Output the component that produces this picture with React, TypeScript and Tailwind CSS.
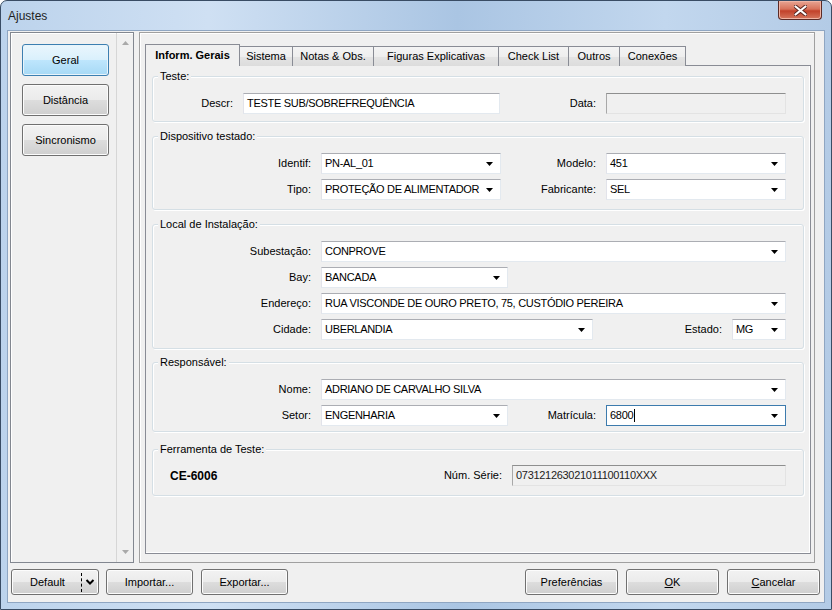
import React from "react";

const btnBg =
  "bg-[linear-gradient(#f2f2f2,#ebebeb_50%,#dddddd_50%,#cfcfcf)] border border-[#707070] rounded-[3px] shadow-[inset_0_0_0_1px_#fcfcfc]";

const Arrow = () => (
  <svg width="7" height="4" viewBox="0 0 7 4" className="absolute right-[7px] top-[8px]">
    <path d="M0 0h7L3.5 4z" fill="#000" />
  </svg>
);

const Combo = ({ value, className, focused }: { value: string; className: string; focused?: boolean }) => (
  <div
    className={`relative flex h-[21px] shrink-0 items-center bg-white pl-[3px] text-[11px] tracking-[-0.3px] border ${
      focused ? "border-[#3d7bad]" : "border-[#e3e9ef] border-t-[#abadb3] border-l-[#e2e3ea]"
    } ${className}`}
  >
    <span className="whitespace-nowrap">{value}</span>
    {focused && <span className="ml-[1px] h-[13px] w-[1px] bg-black" />}
    <Arrow />
  </div>
);

const TextBox = ({ value, className, disabled }: { value: string; className: string; disabled?: boolean }) => (
  <div
    className={`flex h-[21px] shrink-0 items-center pl-[3px] text-[11px] tracking-[-0.3px] border ${
      disabled
        ? "bg-[#f0f0f0] border-[#e3e3e3] border-t-[#8e8f8f] border-l-[#a8a8a8] text-[#222]"
        : "bg-white border-[#e3e9ef] border-t-[#abadb3] border-l-[#e2e3ea]"
    } ${className}`}
  >
    <span className="whitespace-nowrap">{value}</span>
  </div>
);

const Label = ({ text, className }: { text: string; className: string }) => (
  <span className={`shrink-0 pr-[10px] text-right text-[11px] whitespace-nowrap ${className}`}>{text}</span>
);

const Group = ({ title, className, children }: { title: string; className: string; children: React.ReactNode }) => (
  <div className={`relative rounded-[3px] border border-[#d5dfe5] shadow-[inset_1px_1px_0_#fff,1px_1px_0_#fff] ${className}`}>
    <span className="absolute -top-[8px] left-[5px] bg-[#f0f0f0] px-[2px] text-[11px] leading-[14px]">{title}</span>
    {children}
  </div>
);

const SideButton = ({ text, active }: { text: string; active?: boolean }) => (
  <div
    className={`flex h-[32px] w-[87px] items-center justify-center text-[11px] ${
      active
        ? "rounded-[3px] border border-[#3c7fb1] bg-[linear-gradient(#eaf6fd,#d9f0fc_50%,#bee6fd_50%,#a7d9f5)] shadow-[inset_0_0_0_1px_#e8f4fb]"
        : btnBg
    }`}
  >
    {text}
  </div>
);

const Tab = ({ text, className }: { text: string; className: string }) => (
  <div
    className={`-ml-[1px] flex h-[20px] items-center justify-center border border-b-0 border-[#898c95] bg-[linear-gradient(#f4f4f4,#eeeeee_50%,#e4e4e4_50%,#dcdcdc)] text-[11px] ${className}`}
  >
    {text}
  </div>
);

const BottomButton = ({ children, className }: { children: React.ReactNode; className: string }) => (
  <div className={`flex h-[26px] items-center justify-center text-[11px] ${btnBg} ${className}`}>{children}</div>
);

export default function App() {
  return (
    <div className="h-[610px] w-[832px] overflow-hidden rounded-t-[7px] border border-[#394c64] bg-[linear-gradient(90deg,#bcd3ec,#cfe0f3_25%,#aac5e3_55%,#c2d7ee_80%,#b3cbe6)] font-['Liberation_Sans',Arial,sans-serif] text-black">
      {/* title bar */}
      <div className="flex h-[29px] items-start justify-between pl-[7px] pr-[9px]">
        <span className="mt-[6px] text-[12px] text-[#1e1e1e]">Ajustes</span>
        <div className="flex h-[19px] w-[44px] items-center justify-center rounded-b-[4px] border border-t-0 border-[#5b2a25] bg-[linear-gradient(#e8a593,#d8725a_45%,#c2412a_55%,#d5765d)] shadow-[inset_0_0_0_1px_#f0b4a4]">
          <svg width="13" height="11" viewBox="0 0 13 11">
            <path d="M1.5 1.5l10 8M11.5 1.5l-10 8" stroke="#5a2620" strokeWidth="4" strokeLinecap="round" />
            <path d="M1.5 1.5l10 8M11.5 1.5l-10 8" stroke="#fff" strokeWidth="2.2" strokeLinecap="round" />
          </svg>
        </div>
      </div>

      {/* client */}
      <div className="mx-[6px] h-[573px] border border-[#8fa6c2] bg-[#f0f0f0]">
        <div className="flex pl-[2px] pt-[1px]">
          {/* left panel */}
          <div className="flex h-[531px] w-[124px] border border-[#828790] bg-[#f0f0f0] shadow-[inset_1px_1px_0_#fff]">
            <div className="flex flex-col gap-[8px] pl-[11px] pt-[11px]">
              <SideButton text="Geral" active />
              <SideButton text="Distância" />
              <SideButton text="Sincronismo" />
            </div>
            <div className="ml-auto flex w-[17px] flex-col items-center justify-between border-l border-[#d6d6d6] py-[8px]">
              <svg width="7" height="4" viewBox="0 0 7 4">
                <path d="M0 4h7L3.5 0z" fill="#a9a9a9" />
              </svg>
              <svg width="7" height="4" viewBox="0 0 7 4">
                <path d="M0 0h7L3.5 4z" fill="#a9a9a9" />
              </svg>
            </div>
          </div>

          {/* main panel */}
          <div className="ml-[5px] h-[531px] w-[676px] border border-[#a0a0a0] pl-[5px] pt-[11px] shadow-[inset_1px_1px_0_#fff]">
            <div className="flex h-[22px] items-end">
              <div className="relative z-10 flex h-[22px] w-[95px] items-center justify-center border border-b-0 border-[#898c95] bg-[#f0f0f0] text-[11px] font-bold">
                Inform. Gerais
              </div>
              <Tab text="Sistema" className="w-[54px]" />
              <Tab text="Notas & Obs." className="w-[82px]" />
              <Tab text="Figuras Explicativas" className="w-[126px]" />
              <Tab text="Check List" className="w-[71px]" />
              <Tab text="Outros" className="w-[52px]" />
              <Tab text="Conexões" className="w-[67px]" />
            </div>
            <div className="-mt-[1px] h-[489px] w-[666px] border border-[#898c95] bg-[#f0f0f0] px-[6px] pt-[10px] shadow-[inset_-1px_-1px_0_#fff]">
              <Group title="Teste:" className="h-[46px]">
                <div className="flex items-center pt-[16px]">
                  <Label text="Descr:" className="w-[90px]" />
                  <TextBox value="TESTE SUB/SOBREFREQUÊNCIA" className="w-[257px]" />
                  <Label text="Data:" className="w-[106px]" />
                  <TextBox value="" className="w-[180px]" disabled />
                </div>
              </Group>

              <Group title="Dispositivo testado:" className="mt-[14px] h-[74px]">
                <div className="flex flex-col gap-[5px] pt-[16px]">
                  <div className="flex items-center">
                    <Label text="Identif:" className="w-[168px]" />
                    <Combo value="PN-AL_01" className="w-[180px]" />
                    <Label text="Modelo:" className="w-[105px]" />
                    <Combo value="451" className="w-[180px]" />
                  </div>
                  <div className="flex items-center">
                    <Label text="Tipo:" className="w-[168px]" />
                    <Combo value="PROTEÇÃO DE ALIMENTADOR" className="w-[180px]" />
                    <Label text="Fabricante:" className="w-[105px]" />
                    <Combo value="SEL" className="w-[180px]" />
                  </div>
                </div>
              </Group>

              <Group title="Local de Instalação:" className="mt-[14px] h-[125px]">
                <div className="flex flex-col gap-[5px] pt-[16px]">
                  <div className="flex items-center">
                    <Label text="Subestação:" className="w-[168px]" />
                    <Combo value="CONPROVE" className="w-[465px]" />
                  </div>
                  <div className="flex items-center">
                    <Label text="Bay:" className="w-[168px]" />
                    <Combo value="BANCADA" className="w-[187px]" />
                  </div>
                  <div className="flex items-center">
                    <Label text="Endereço:" className="w-[168px]" />
                    <Combo value="RUA VISCONDE DE OURO PRETO, 75, CUSTÓDIO PEREIRA" className="w-[465px]" />
                  </div>
                  <div className="flex items-center">
                    <Label text="Cidade:" className="w-[168px]" />
                    <Combo value="UBERLANDIA" className="w-[272px]" />
                    <Label text="Estado:" className="w-[139px]" />
                    <Combo value="MG" className="w-[54px]" />
                  </div>
                </div>
              </Group>

              <Group title="Responsável:" className="mt-[13px] h-[70px]">
                <div className="flex flex-col gap-[5px] pt-[16px]">
                  <div className="flex items-center">
                    <Label text="Nome:" className="w-[168px]" />
                    <Combo value="ADRIANO DE CARVALHO SILVA" className="w-[465px]" />
                  </div>
                  <div className="flex items-center">
                    <Label text="Setor:" className="w-[168px]" />
                    <Combo value="ENGENHARIA" className="w-[187px]" />
                    <Label text="Matrícula:" className="w-[98px]" />
                    <Combo value="6800" className="w-[180px]" focused />
                  </div>
                </div>
              </Group>

              <Group title="Ferramenta de Teste:" className="mt-[17px] h-[47px]">
                <div className="flex items-center pt-[15px]">
                  <span className="w-[290px] shrink-0 pl-[17px] text-[12px] font-bold">CE-6006</span>
                  <Label text="Núm. Série:" className="w-[69px]" />
                  <TextBox value="073121263021011100110XXX" className="w-[274px]" disabled />
                </div>
              </Group>
            </div>
          </div>
        </div>

        {/* bottom buttons */}
        <div className="flex items-center pl-[3px] pr-[4px] pt-[6px]">
          <div className={`flex h-[26px] w-[88px] items-center text-[11px] ${btnBg}`}>
            <span className="flex-1 pl-[2px] text-center">Default</span>
            <span className="h-[19px] border-l border-dashed border-black" />
            <svg width="16" height="8" viewBox="0 0 16 8" className="shrink-0">
              <path d="M4.5 2l3.5 3.5L11.5 2" stroke="#000" strokeWidth="2" fill="none" />
            </svg>
          </div>
          <BottomButton className="ml-[7px] w-[87px]">Importar...</BottomButton>
          <BottomButton className="ml-[8px] w-[87px]">Exportar...</BottomButton>
          <div className="flex-1" />
          <BottomButton className="w-[93px]">Preferências</BottomButton>
          <BottomButton className="ml-[8px] w-[93px]">
            <span className="underline">O</span>K
          </BottomButton>
          <BottomButton className="ml-[8px] w-[93px]">
            <span className="underline">C</span>ancelar
          </BottomButton>
        </div>
      </div>
    </div>
  );
}
